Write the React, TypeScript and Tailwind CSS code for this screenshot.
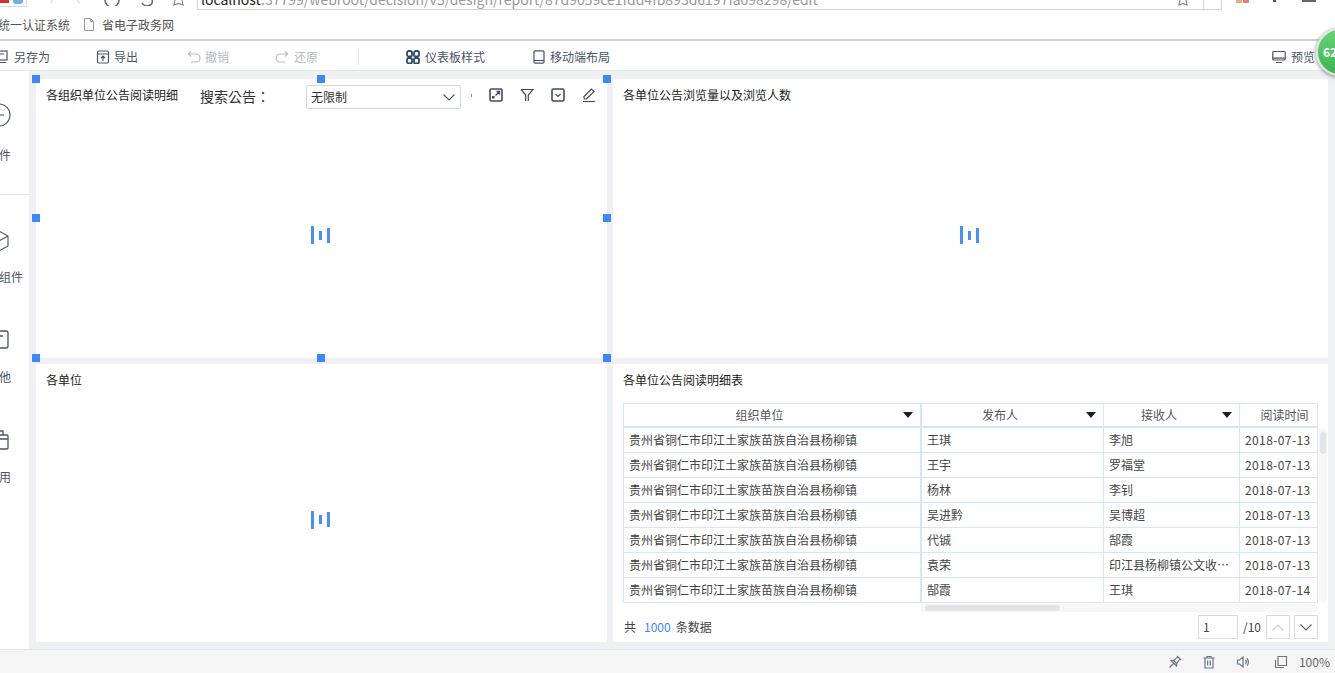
import React from "react";

const font = { fontFamily: '"Noto Sans CJK SC","Liberation Sans",sans-serif' };

function Svg({ s = 14, children, className = "" }: { s?: number; children: React.ReactNode; className?: string }) {
  return (
    <svg width={s} height={s} viewBox="0 0 14 14" fill="none" stroke="currentColor" strokeWidth="1.2" className={"shrink-0 " + className}>
      {children}
    </svg>
  );
}

function Handle({ className }: { className: string }) {
  return <div className={"absolute w-2 h-2 bg-[#3f87f5] z-10 " + className} />;
}

function Loader() {
  return (
    <div className="flex-1 flex items-center justify-center">
      <div className="flex items-center gap-[5px] -ml-[3px] mt-[1px]">
        <div className="w-[3px] h-[18px] bg-[#4a90f0]" />
        <div className="w-[3px] h-[9px] bg-[#4a90f0]" />
        <div className="w-[3px] h-[15px] bg-[#4a90f0]" />
      </div>
    </div>
  );
}

function TB({ icon, label, className = "", muted }: { icon: React.ReactNode; label: string; className?: string; muted?: boolean }) {
  return (
    <div className={"flex items-center shrink-0 " + (muted ? "text-[#b8bcc4] " : "text-[#4a5568] ") + className}>
      {icon}
      <span className="text-[12px] leading-none pt-[1px]">{label}</span>
    </div>
  );
}

const rows = [
  ["王琪", "李旭", "2018-07-13"],
  ["王宇", "罗福堂", "2018-07-13"],
  ["杨林", "李钊", "2018-07-13"],
  ["吴进黔", "吴博超", "2018-07-13"],
  ["代铖", "郜霞", "2018-07-13"],
  ["袁荣", "印江县杨柳镇公文收发员", "2018-07-13"],
  ["郜霞", "王琪", "2018-07-14"],
];

function Tri() {
  return <div className="absolute right-[7px] top-[8px] w-0 h-0 border-l-[5px] border-r-[5px] border-t-[6px] border-l-transparent border-r-transparent border-t-[#1f1f1f]" />;
}

function HeadCell({ w, label, tri, thick }: { w: string; label: string; tri?: boolean; thick?: boolean }) {
  return (
    <div className={"relative h-full flex items-center justify-center text-[12px] text-[#555] border-b-2 border-b-[#d3e7fb] border-r border-r-[#d3e7fb] shrink-0 " + w + (thick ? " border-r-2" : "") + (tri ? " pr-[25px]" : " pl-[12px]")}>
      <span>{label}</span>
      {tri && <Tri />}
    </div>
  );
}

function Cell({ w, label, thick, mono }: { w: string; label: string; thick?: boolean; mono?: boolean }) {
  return (
    <div className={"h-full flex items-center pl-[5px] text-[12px] text-[#444] border-b border-b-[#d3e7fb] border-r border-r-[#d3e7fb] shrink-0 overflow-hidden whitespace-nowrap " + w + (thick ? " border-r-2" : "") + (mono ? " tracking-[0.4px]" : "")}>
      <span className="truncate block w-full pr-[5px]">{label}</span>
    </div>
  );
}

export default function App() {
  return (
    <div style={font} className="relative w-[1335px] h-[673px] overflow-hidden bg-[#eff0f4] flex flex-col">
      {/* address bar strip */}
      <div className="h-[10px] bg-white flex items-start relative overflow-hidden shrink-0">
        <div className="w-[27px] h-[7px] shrink-0 flex border-r border-b border-[#d8d8d8]">
          <div className="w-[9px] h-[3px] bg-[#d8342a]" />
          <div className="ml-[4px] w-[10px] h-[4px] bg-[#6fb2de] rounded-b-[3px]" />
        </div>
        <div className="flex items-start h-[10px] ml-[20px] shrink-0">
          <svg width="36" height="6" viewBox="0 0 36 6" fill="none" stroke="#e0e0e0" strokeWidth="1.5"><path d="M6 0 3 3M30 0l3 3" /></svg>
          <svg width="16" height="6" viewBox="0 0 16 6" fill="none" stroke="#666" strokeWidth="1.5" className="ml-[21px]"><path d="M1 0A7 7 0 0 0 15 0" /></svg>
          <svg width="14" height="6" viewBox="0 0 14 6" fill="none" stroke="#666" strokeWidth="1.5" className="ml-[19px]"><path d="M13 0A5 4 0 0 1 3 3" /></svg>
          <svg width="13" height="6" viewBox="0 0 13 6" fill="none" stroke="#888" strokeWidth="1.2" className="ml-[19px]"><path d="M3 0 2 5l4.500-1.500L11 5l-1-5" /></svg>
        </div>
        <div className="ml-[12px] w-[1025px] h-[10px] bg-white border border-t-0 border-[#d4d4d4] relative overflow-hidden shrink-0">
          <div className="absolute left-[3px] -top-[11px] text-[14px] whitespace-nowrap text-[#9a9a9a]">
            <span className="text-[#222]">localhost</span>:37799/webroot/decision/v5/design/report/87d9059ce1fdd4fb893d6197fa098298/edit
          </div>
          <svg width="12" height="6" viewBox="0 0 12 6" fill="none" stroke="#888" strokeWidth="1.200" className="absolute right-[32px] top-0"><path d="M3 0 2 5l4-1.500L10 5 9 0" /></svg>
          <div className="absolute right-[17px] top-0 w-px h-full bg-[#d4d4d4]" />
        </div>
        <div className="ml-[14px] w-[6px] h-[3px] bg-[#f5a37d]" />
        <div className="ml-px w-[6px] h-[3px] bg-[#ee7b7b]" />
        <div className="ml-[24px] w-[3px] h-[2px] bg-[#555]" />
        <div className="ml-[26px] w-[14px] h-[2px] bg-[#666]" />
      </div>

      {/* bookmarks */}
      <div className="h-[31px] bg-white border-b-2 border-b-[#cfcfcf] flex items-center shrink-0 text-[12px] text-[#555]">
        <span className="-ml-[2px] w-[86px] shrink-0">统一认证系统</span>
        <svg width="10" height="13" viewBox="0 0 10 13" fill="none" stroke="#999" strokeWidth="1" className="mr-[8px] shrink-0"><path d="M.5.5h6l3 3v9h-9z M6.500.5v3h3" /></svg>
        <span>省电子政务网</span>
      </div>

      {/* toolbar */}
      <div className="h-[30px] pt-[2px] bg-white border-b border-b-[#e5e6ea] flex items-center shrink-0">
        <TB className="-ml-[5px] w-[101px] gap-[5px]" label="另存为" icon={
          <Svg><rect x="1" y="1" width="11" height="9" /><path d="M3 12.500h8M4 4h5" /></Svg>} />
        <TB className="w-[91px] gap-[4px]" label="导出" icon={
          <Svg><rect x="1.500" y="1" width="11" height="12" rx="1.500" /><path d="M1.500 4h11M7 11V6.500M5 8l2-2 2 2" /></Svg>} />
        <TB muted className="w-[88px] gap-[4px]" label="撤销" icon={
          <Svg><path d="M4 1.500 1.500 4 4 6.500M1.500 4H9a3.500 3.500 0 0 1 0 8H4" /></Svg>} />
        <TB muted className="w-[83px] gap-[5px]" label="还原" icon={
          <Svg><path d="M10 1.500 12.500 4 10 6.500M12.500 4H5a3.500 3.500 0 0 0 0 8h5" /></Svg>} />
        <div className="w-px h-[16px] bg-[#e3e3e3] mr-[47px] shrink-0" />
        <TB className="w-[126px] gap-[5px]" label="仪表板样式" icon={
          <Svg><rect x="1" y="1" width="5" height="5.500" rx="1.800" stroke="#31486b" strokeWidth="1.800" /><rect x="8" y="1" width="5" height="5.500" rx="1.800" stroke="#31486b" strokeWidth="1.800" /><rect x="1" y="8" width="5" height="5.500" rx="1.800" stroke="#31486b" strokeWidth="1.800" /><rect x="8" y="8" width="5" height="5.500" rx="1.800" stroke="#31486b" strokeWidth="1.800" /></Svg>} />
        <TB className="gap-[4px]" label="移动端布局" icon={
          <Svg><rect x="2" y=".8" width="10" height="12.400" rx="1.200" /><path d="M2 10.500h10" /></Svg>} />
        <div className="flex-1" />
        <TB className="mr-[20px] gap-[5px]" label="预览" icon={
          <Svg><rect x=".8" y="1.500" width="12.400" height="8.500" rx="1" /><path d="M.8 8.200h12.400M4 12.500h6" /></Svg>} />
      </div>

      {/* green ball */}
      <div className="absolute left-[1316px] top-[28px] w-[48px] h-[48px] rounded-full bg-gradient-to-b from-[#66d477] to-[#3cb552] border-[2px] border-[#dfe3df] shadow-[0_1px_4px_rgba(0,0,0,0.5)] flex items-center z-20">
        <span className="text-[12px] font-bold text-white pl-[5px] leading-none">62</span>
      </div>

      {/* body */}
      <div className="flex-1 flex min-h-0">
        {/* sidebar */}
        <div className="w-[29px] bg-white overflow-hidden shrink-0">
          <div className="w-[60px] -ml-[31px] flex flex-col items-center text-[12px] text-[#4a5568] pt-[32px]">
            <svg width="24" height="24" viewBox="0 0 24 24" fill="none" stroke="#4a5568" strokeWidth="1.100"><circle cx="12" cy="12" r="11" /><path d="M7 12h10" /></svg>
            <span className="mt-[21px] leading-[14px]">控件</span>
            <div className="w-full h-px bg-[#e8e8e8] mt-[32px]" />
            <svg width="24" height="24" viewBox="0 0 24 24" fill="none" stroke="#4a5568" strokeWidth="1.100" className="mt-[34px]"><path d="M12 2l9 5v10l-9 5-9-5V7z M12 12l9-5M12 12 3 7M12 12v10" /></svg>
            <span className="mt-[17px] leading-[14px] whitespace-nowrap">我的组件</span>
            <svg width="24" height="24" viewBox="0 0 24 24" fill="none" stroke="#4a5568" strokeWidth="1.300" className="mt-[44px]"><rect x="3" y="3" width="18" height="17" rx="2" /><path d="M8 8h8M8 12h5" /></svg>
            <span className="mt-[18px] leading-[14px]">其他</span>
            <svg width="24" height="24" viewBox="0 0 24 24" fill="none" stroke="#4a5568" strokeWidth="1.300" className="mt-[44px]"><rect x="3" y="7" width="18" height="14" rx="1" /><path d="M3 11h18M8 7V3h8v4" /></svg>
            <span className="mt-[18px] leading-[14px]">复用</span>
          </div>
        </div>

        {/* grid */}
        <div className="relative flex-1 pt-[8px] pl-[7px] grid grid-cols-[571px_715px] grid-rows-[279px_278px] gap-[6px] content-start">
          {/* panel 1 */}
          <div className="relative bg-white flex flex-col">
            <div className="h-[32px] shrink-0 flex items-center text-[12px] text-[#1c1c1c] pl-[10px] relative">
              <span className="w-[154px] shrink-0 -mt-[1px]">各组织单位公告阅读明细</span>
              <span className="text-[14px] w-[106px] shrink-0 text-[#333] mt-[2px]" style={{ fontFamily: '"Noto Sans CJK TC",sans-serif' }}>搜索公告：</span>
              <div className="w-[155px] h-[24px] mt-[4px] border border-[#d6d8dc] rounded-[2px] flex items-center justify-between pl-[4px] pr-[5px] shrink-0 text-[#333]">
                <span>无限制</span>
                <svg width="12" height="7" viewBox="0 0 12 7" fill="none" stroke="#4b5a70" strokeWidth="1.100"><path d="M.5.5 6 6 11.500.5" /></svg>
              </div>
              <div className="ml-[10px] w-px h-[3px] bg-[#888] shrink-0" />
              <div className="flex items-center text-[#3d4d66] ml-[17px] gap-[17px]">
                <Svg s={14}><rect x="1" y="1" width="12" height="12" rx="1.500" strokeWidth="1.600" /><path d="M6.500 7.500l4-4M7.500 3.500h3v3" strokeWidth="1.300" /><rect x="3" y="8" width="2.500" height="2.500" fill="currentColor" stroke="none" /></Svg>
                <Svg s={14}><path d="M1 1.500h12L8.300 7v6M5.700 13V7L1 1.500" /></Svg>
                <Svg s={14}><rect x="1" y="1" width="12" height="12" rx="1.500" strokeWidth="1.600" /><path d="M4.500 6 7 8.500 9.500 6" /></Svg>
                <Svg s={14}><path d="M1 13.500h12M2 10.500V8.500L9.500 1l2.500 2.500L4.500 11H2" /></Svg>
              </div>
            </div>
            <Loader />
            <Handle className="-left-1 -top-1" />
            <Handle className="left-[281px] -top-1" />
            <Handle className="-right-1 -top-1" />
            <Handle className="-left-1 top-[135px]" />
            <Handle className="-right-1 top-[135px]" />
            <Handle className="-left-1 -bottom-1" />
            <Handle className="left-[281px] -bottom-1" />
            <Handle className="-right-1 -bottom-1" />
          </div>

          {/* panel 2 */}
          <div className="bg-white flex flex-col">
            <div className="h-[32px] shrink-0 flex items-center text-[12px] text-[#1c1c1c] pl-[10px]">
              <span className="-mt-[1px]">各单位公告浏览量以及浏览人数</span>
            </div>
            <Loader />
          </div>

          {/* panel 3 */}
          <div className="bg-white flex flex-col">
            <div className="h-[32px] shrink-0 flex items-center text-[12px] text-[#1c1c1c] pl-[10px]">
              <span className="-mt-[1px]">各单位</span>
            </div>
            <Loader />
          </div>

          {/* panel 4 */}
          <div className="bg-white flex flex-col relative">
            <div className="h-[32px] shrink-0 flex items-center text-[12px] text-[#1c1c1c] pl-[10px]">
              <span className="-mt-[1px]">各单位公告阅读明细表</span>
            </div>
            <div className="ml-[10px] mt-[7px] w-[695px] border-t border-l border-[#d3e7fb]">
              <div className="flex h-[24px]">
                <HeadCell w="w-[298px]" thick label="组织单位" tri />
                <HeadCell w="w-[182px]" label="发布人" tri />
                <HeadCell w="w-[136px]" label="接收人" tri />
                <HeadCell w="w-[78px]" label="阅读时间" />
              </div>
              {rows.map((r, i) => (
                <div key={i} className="flex h-[25px]">
                  <Cell w="w-[298px]" thick label="贵州省铜仁市印江土家族苗族自治县杨柳镇" />
                  <Cell w="w-[182px]" label={r[0]} />
                  <Cell w="w-[136px]" label={r[1]} />
                  <Cell w="w-[78px]" label={r[2]} mono />
                </div>
              ))}
            </div>
            {/* vertical scrollbar */}
            <div className="absolute left-[706px] top-[64px] w-[8px] h-[175px] bg-[#f7f7f8] rounded-[4px]">
              <div className="ml-[1px] mt-[4px] w-[6px] h-[22px] rounded-[3px] bg-[#e2e4e8]" />
            </div>
            {/* horizontal scrollbar */}
            <div className="ml-[308px] mt-[1px] w-[397px] h-[8px] bg-[#f7f7f8] rounded-[4px] flex items-center">
              <div className="ml-[4px] w-[135px] h-[6px] rounded-[3px] bg-[#e2e4e8]" />
            </div>
            <div className="ml-[11px] mr-[10px] mt-[3px] flex items-center text-[12px] text-[#444]">
              <span>共</span>
              <span className="text-[#3f87f5] ml-[8px]">1000</span>
              <span className="ml-[5px]">条数据</span>
              <div className="flex-1" />
              <div className="w-[40px] h-[24px] border border-[#d9dbdf] flex items-center pl-[4px]">1</div>
              <span className="ml-[5px] w-[23px]">/10</span>
              <div className="w-[24px] h-[24px] border border-[#d9dbdf] flex items-center justify-center">
                <svg width="12" height="7" viewBox="0 0 12 7" fill="none" stroke="#c9ccd2" strokeWidth="1.100"><path d="M.5 6.500 6 1l5.500 5.500" /></svg>
              </div>
              <div className="ml-[4px] w-[24px] h-[24px] border border-[#d9dbdf] flex items-center justify-center">
                <svg width="12" height="7" viewBox="0 0 12 7" fill="none" stroke="#4b5a70" strokeWidth="1.100"><path d="M.5.5 6 6 11.500.5" /></svg>
              </div>
            </div>
          </div>
        </div>
      </div>

      {/* status bar */}
      <div className="h-[24px] bg-[#f5f5f5] border-t border-t-[#e4e5e8] flex items-center justify-end pr-[5px] text-[#555] shrink-0">
        <Svg s={14} className="text-[#6b7788]"><path d="M9 1l4 4M5 5l4 4M10 2 6 5 3 5.500 8.500 11 9 8l3-4M5.500 8.500 1.500 12.500" /></Svg>
        <Svg s={14} className="ml-[20px] text-[#6b7788]"><path d="M1.500 3h11M5 3V1.500h4V3M3 3v10h8V3M5.700 5.500v5M8.300 5.500v5" /></Svg>
        <Svg s={14} className="ml-[20px] text-[#6b7788]"><path d="M1.500 5v4h2L7 12V2L3.500 5zM9.500 5a3 3 0 0 1 0 4M11 3.500a5 5 0 0 1 0 7" /></Svg>
        <Svg s={14} className="ml-[24px] text-[#6b7788]"><path d="M4 1.500h8.500V10.500H4zM1.500 5v7.500H10" /></Svg>
        <span className="ml-[11px] text-[12px] text-[#666]">100%</span>
      </div>
    </div>
  );
}
